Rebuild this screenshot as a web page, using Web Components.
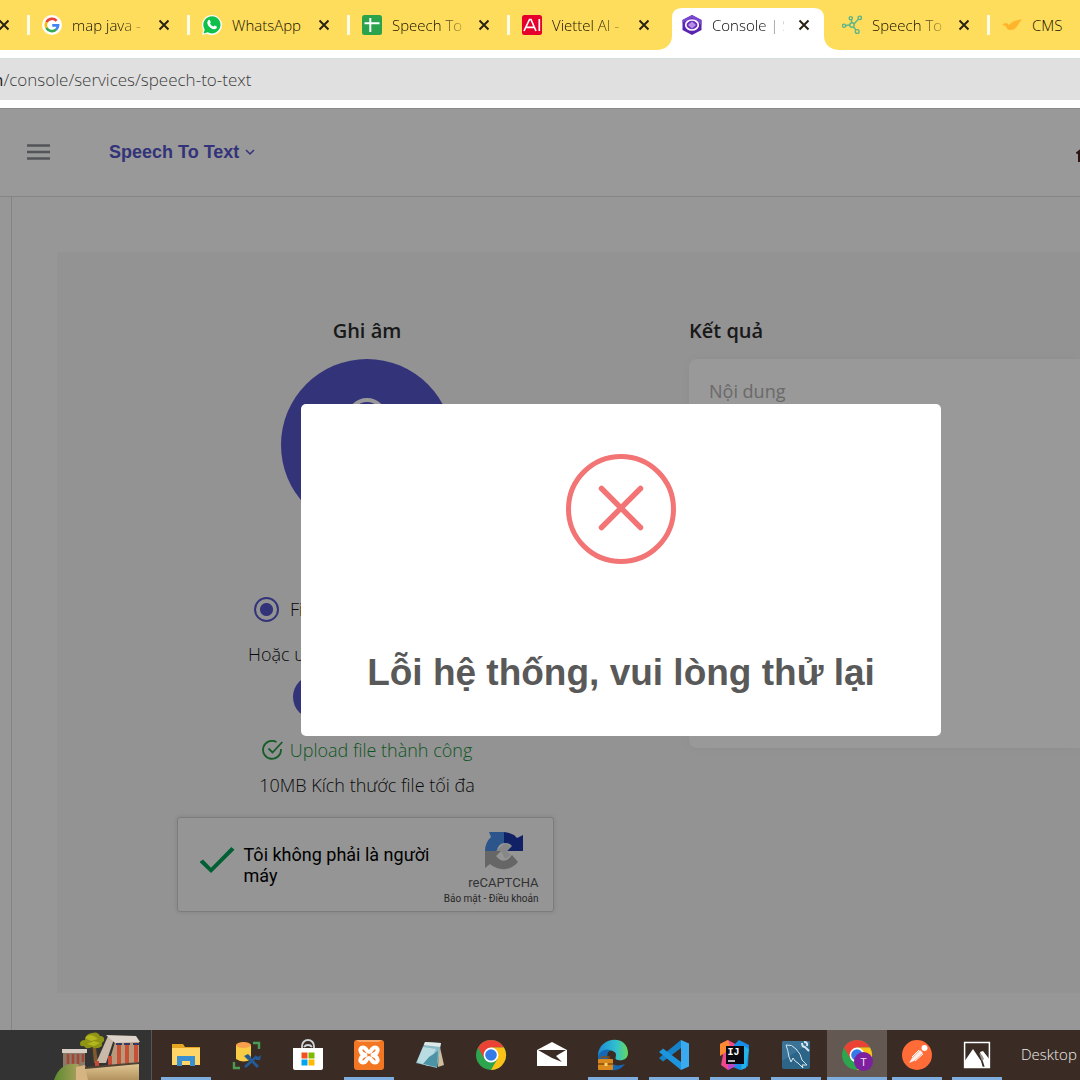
<!DOCTYPE html>
<html lang="vi">
<head>
<meta charset="utf-8">
<title>Console | Speech To Text</title>
<style>
  html, body { margin: 0; min-height: 100%; }
  body { font-family: "Open Sans", "Noto Sans", sans-serif; color: #2b2b2b; overflow-x: hidden; }
</style>
</head>
<body>
<desktop-screen></desktop-screen>

<script>
const define = (name, css, html) => {
  const tpl = document.createElement('template');
  tpl.innerHTML = `<style>*{box-sizing:border-box}${css}</style>${html}`;
  customElements.define(name, class extends HTMLElement {
    constructor() {
      super();
      this.attachShadow({ mode: 'open' }).append(tpl.content.cloneNode(true));
    }
  });
};

/* ---------- browser chrome ---------- */
define('browser-tab', `
  :host { display: flex; align-items: center; flex: none; width: 160px; height: 50px; position: relative;
    padding: 0 14px 0 14px; gap: 10px; box-sizing: border-box; font-size: 15px; color: #140f02; font-weight: 300; }
  :host([divided])::before { content: ""; width: 3px; height: 20px; background: #fffbe9; position: absolute; left: -1px; top: 15px; }
  :host([cut]) { width: 28px; justify-content: flex-end; overflow: hidden; }
  :host([cut]) .label, :host([cut]) slot[name=icon] { display: none; }
  :host([active]) { color: #000; z-index: 1; }
  .plate { display: none; }
  :host([active]) .plate { display: block; position: absolute; left: -12px; top: 8px; width: 184px; height: 42px; z-index: -1; }
  ::slotted(svg) { width: 20px; height: 20px; flex: none; display: block; }
  .label { flex: 1; min-width: 0; overflow: hidden; white-space: nowrap; line-height: 24px;
    -webkit-mask-image: linear-gradient(90deg, #000 65%, transparent 110%); mask-image: linear-gradient(90deg, #000 65%, transparent 110%); }
  :host([full]) .label { -webkit-mask-image: none; mask-image: none; }
  button { flex: none; width: 20px; height: 20px; padding: 0; border: 0; background: none; display: grid; place-items: center; }
`, `
  <svg class="plate" viewBox="0 0 184 42"><path d="M0 42C10 42 16 36 16 28V10Q16 0 26 0H158Q168 0 168 10V28C168 36 174 42 184 42Z" fill="#fff"/></svg>
  <slot name="icon"></slot>
  <span class="label"><slot></slot></span>
  <button aria-label="Đóng thẻ"><svg width="12" height="12" viewBox="0 0 12 12"><path d="M1.5 1.5l9 9M10.5 1.5l-9 9" stroke="#2a2313" stroke-width="2"/></svg></button>
`);

define('address-bar', `
  :host { display: block; background: #fff; padding: 8px 0; }
  label { display: flex; align-items: center; height: 42px; background: #e0e0e0; border-top: 1px solid #d6e0da; font-size: 17px; font-weight: 300; color: #222; }
  span { margin-left: -7px; font-weight: 400; }
  input { flex: 1; min-width: 0; height: 40px; border: 0; padding: 0; background: none; outline: 0; font: inherit; color: #3c3c3c; }
`, `<label><span>n</span><input aria-label="Địa chỉ" value="/console/services/speech-to-text"></label>`);

define('tab-strip', `
  :host { display: flex; height: 50px; background: #ffdd5c; overflow: hidden; }
`, `
  <browser-tab cut></browser-tab>
  <browser-tab divided>
    <svg slot="icon" viewBox="0 0 20 20"><circle cx="10" cy="10" r="10" fill="#fff"/>
      <g fill="none" stroke-width="2.6"><path d="M14.6 5.8A6.2 6.2 0 0 0 4.5 7.2" stroke="#ea4335"/><path d="M4.5 7.2a6.2 6.2 0 0 0 0 5.6" stroke="#fbbc05"/><path d="M4.5 12.8a6.2 6.2 0 0 0 9.6 1.8" stroke="#34a853"/><path d="M14.1 14.6a6 6 0 0 0 2-4.2H10.2" stroke="#4285f4"/></g></svg>map java - Google</browser-tab>
  <browser-tab divided full>
    <svg slot="icon" viewBox="0 0 20 20"><path d="M0 20l1.3-5A10 10 0 1 1 5 18.7Z" fill="#fff"/><path d="M1.6 18.4l1.1-3.9a8.6 8.6 0 1 1 3 2.8Z" fill="#0fc14b"/><path d="M6.4 5.2c.5-.5 1.3-.5 1.6.2l.7 1.7c.2.6-.7 1.2-.6 1.5.7 1.5 1.8 2.5 3.2 3 .4.1 1-1.1 1.4-1l1.9.9c.5.3.3 1.4-.3 2-1.3 1.2-3.400.9-5.200-.2C7.300 12.200 5.900 10.400 5.400 8.500c-.3-1.300.1-2.500 1-3.300Z" fill="#fff"/></svg>WhatsApp</browser-tab>
  <browser-tab divided>
    <svg slot="icon" viewBox="0 0 20 20"><rect width="20" height="20" rx="2.500" fill="#2ba24c"/><path d="M8.300 3v14M2.500 8.300h15" stroke="#fff" stroke-width="2"/></svg>Speech To Text</browser-tab>
  <browser-tab divided>
    <svg slot="icon" viewBox="0 0 20 20"><rect width="20" height="20" rx="2.500" fill="#e6002b"/><path d="M2 16L7.500 4.500h1.500L14 16M4.500 12.300H12M17.300 4v12" fill="none" stroke="#fff" stroke-width="1.700"/></svg>Viettel AI - Nền</browser-tab>
  <browser-tab active>
    <svg slot="icon" viewBox="0 0 20 20"><path d="M10 0l9.500 5v10L10 20 .5 15V5Z" fill="#5a22b0"/><path d="M10 0l9.500 5v5L10 3 .5 8V5Z" fill="#7a48cc"/><ellipse cx="10" cy="10" rx="6.300" ry="5" fill="#6a30ba" stroke="#fff" stroke-width="1.700"/><path d="M10 6.500l4 3.500-4 3.500L6 10Z" fill="#b98ce8"/></svg>Console | Speech</browser-tab>
  <browser-tab>
    <svg slot="icon" viewBox="0 0 20 20" fill="none" stroke="#5cb58d" stroke-width="1.400"><path d="M4 10.500l4-.5M12 9l4.500-5M9.300 5l.5 2.500M11.500 12l2.500 3"/><circle cx="2" cy="10.700" r="1.600"/><circle cx="10" cy="10" r="2.200"/><circle cx="8.800" cy="3.200" r="1.600"/><circle cx="17.800" cy="2.800" r="1.700"/><circle cx="15.200" cy="16.500" r="1.900"/></svg>Speech To Text</browser-tab>
  <browser-tab divided full>
    <svg slot="icon" viewBox="0 0 20 20"><path d="M0 10q4-4 7 0Q11 5 20 4.500 17 8 15 11.500q-3 4-7 3.500-3 0-4-3.500-2-2-4-1.500Z" fill="#ffb52b"/></svg>CMS</browser-tab>
`);

/* ---------- application ---------- */
define('app-header', `
  :host { display: flex; align-items: center; height: 89px; padding: 0 0 2px 27px; background: #fff; border-top: 1px solid #e8e8e8; border-bottom: 1px solid #dcdcdc; box-sizing: border-box; overflow: hidden; }
  button { border: 0; padding: 0; background: none; display: flex; align-items: center; }
  .service { margin-left: 59px; gap: 6px; font: bold 18px/24px "Liberation Sans", Arial, sans-serif; color: #5555cb; }
  a { margin: 2px -12px 0 auto; display: block; height: 16px; }
`, `
  <button aria-label="Menu"><svg width="23" height="16" viewBox="0 0 23 16"><path d="M0 1.500h23M0 8h23M0 14.500h23" stroke="#8a8c92" stroke-width="2.400"/></svg></button>
  <button class="service">Speech To Text<svg width="10" height="8" viewBox="0 0 10 8"><path d="M1 2l4 4 4-4" fill="none" stroke="#5555cb" stroke-width="1.500"/></svg></button>
  <a href="#" aria-label="Trang chủ"><svg width="16" height="16" viewBox="0 0 16 16"><path d="M.5 7.500L8 1l7.500 6.500M3 6v9h10V6" fill="none" stroke="#4a2420" stroke-width="2"/></svg></a>
`);

define('record-button', `
  :host { display: block; }
  button { display: flex; justify-content: center; align-items: flex-start; width: 172px; height: 172px; padding: 39px 0 0; border: 0; border-radius: 50%; background: #5555cb; }
`, `<button aria-label="Ghi âm"><svg width="66" height="94" viewBox="0 0 66 94" fill="none" stroke="#fff" stroke-width="4"><rect x="15" y="2" width="36" height="56" rx="18"/><path d="M4 40a29 29 0 0 0 58 0M33 70v20M18 91h30"/></svg></button>`);

define('captcha-box', `
  :host { display: flex; box-sizing: border-box; width: 377px; height: 95px; padding: 14px 14px 4px 22px; background: #f9f9f9; border: 1px solid #cfcfcf; border-radius: 3px; box-shadow: 0 0 4px 1px rgba(0,0,0,.08); font-family: Roboto, sans-serif; font-weight: 400; }
  label { flex: 1; min-width: 0; display: flex; align-items: center; gap: 9px; padding-bottom: 10px; font-size: 18px; line-height: 21px; color: #000; }
  label span { width: 196px; flex: none; }
  input { appearance: none; flex: none; margin: 0 0 9px; width: 35px; height: 26px; background: #009e55;
    clip-path: polygon(0 58%, 10% 48%, 33% 80%, 91% 0, 100% 11%, 33% 100%); }
  .brand { flex: none; display: flex; flex-direction: column; align-items: flex-end; color: #555; }
  .brand svg { margin-right: 16px; display: block; }
  .name { font-size: 13px; line-height: 16px; margin: 5px 0 0; }
  .links { font-size: 10px; line-height: 15px; color: #444; }
  a { color: inherit; text-decoration: none; }
`, `
  <label><input type="checkbox" checked><span>Tôi không phải là người máy</span></label>
  <div class="brand">
    <svg width="38" height="38" viewBox="0 0 38 38"><path d="M0 19A19 19 0 0 1 6 5L4 0H19V11A8 8 0 0 0 12 19Z" fill="#4a90e8"/><path d="M19 0A19 19 0 0 1 32 6L38 3V19H22L27 14A9 9 0 0 0 19 11Z" fill="#1c3aa9"/><path d="M0 19H16L11 24Q19 34 27 23L33 30A19 19 0 0 1 5 32L0 36Z" fill="#ababab"/><path d="M11 19L20 11 26 14 22 19 26 23 20 27 16 19Z" fill="#e2e2e2"/></svg>
    <span class="name">reCAPTCHA</span>
    <span class="links"><a href="#">Bảo mật</a> - <a href="#">Điều khoản</a></span>
  </div>
`);

define('speech-form', `
  :host { display: flex; flex-direction: column; align-items: center; font-size: 18px; line-height: 28px; font-weight: 300; color: #111; }
  h2 { margin: 0 0 14px; font-size: 20px; line-height: 28px; font-weight: 600; color: #2b2b2b; }
  .choice { display: flex; align-items: center; gap: 11px; width: 226px; margin-top: 64px; }
  input { appearance: none; flex: none; width: 25px; height: 25px; margin: 0; border: 2px solid #5555cb; border-radius: 50%; background: radial-gradient(circle, #5555cb 6px, transparent 7px); }
  p { margin: 0; }
  .hint { width: 238px; margin-top: 17px; }
  .pick { width: 148px; height: 44px; margin: 7px 0 17px; border: 0; border-radius: 22px; background: #5555cb; }
  .done { display: flex; align-items: center; gap: 7px; color: #16903a; }
  .size { margin: 7px 0 18px; }
  captcha-box { margin-right: 4px; }
`, `
  <h2>Ghi âm</h2>
  <record-button></record-button>
  <label class="choice"><input type="radio" checked><span>File</span></label>
  <p class="hint">Hoặc upload</p>
  <button class="pick" aria-label="Chọn file"></button>
  <p class="done"><svg width="21" height="20" viewBox="0 0 21 20" fill="none" stroke="#249a42" stroke-width="1.800"><path d="M14.500 2A9 9 0 1 0 19 9M6.500 8.500l4 4L20.300 2"/></svg>Upload file thành công</p>
  <p class="size">10MB Kích thước file tối đa</p>
  <captcha-box></captcha-box>
`);

define('result-panel', `
  :host { display: flex; flex-direction: column; }
  label { margin: 0 0 14px; font-size: 20px; line-height: 28px; font-weight: 600; }
  textarea { display: block; width: 100%; height: 389px; padding: 18px 20px; border: 0; border-radius: 8px 0 0 8px; background: #fff; box-shadow: 0 0 12px rgba(0,0,0,.04); resize: none; outline: 0; font: 400 18px/28px "Open Sans", "Noto Sans", sans-serif; color: #333; }
  textarea::placeholder { color: #b0b0b0; opacity: 1; }
`, `<label for="out">Kết quả</label><textarea id="out" placeholder="Nội dung"></textarea>`);

define('service-page', `
  :host { display: flex; flex: 1; background: #fcfcfc; }
  aside { flex: none; width: 12px; border-right: 1px solid #dcdcdc; }
  main { flex: 1; min-width: 0; padding: 55px 0 37px 45px; display: flex; }
  .card { flex: 1; min-width: 0; display: grid; grid-template-columns: 620px minmax(0, 1fr); gap: 12px; padding: 65px 0 81px; background: #f5f5f5; }
`, `<aside></aside><main><div class="card"><speech-form></speech-form><result-panel></result-panel></div></main>`);

define('error-dialog', `
  :host { position: absolute; inset: 0; display: flex; align-items: center; justify-content: center; padding: 2px 0 0 162px; background: rgba(0,0,0,.4); box-sizing: border-box; }
  div { width: 640px; padding: 50px 20px 39px; background: #fff; border-radius: 5px; text-align: center; }
  svg { display: block; margin: 0 auto 85px; }
  h1 { margin: 0; font: bold 37px/48px "Liberation Sans", Arial, sans-serif; color: #595959; }
`, `
  <div role="alertdialog" aria-labelledby="t">
    <svg width="110" height="110" viewBox="0 0 110 110" fill="none" stroke="#f27474" stroke-width="5"><circle cx="55" cy="55" r="52.500"/><path d="M35.500 34.500l39 39M74.500 34.500l-39 39" stroke-width="5.500" stroke-linecap="round"/></svg>
    <h1 id="t"><slot></slot></h1>
  </div>
`);

/* ---------- task bar ---------- */
define('task-item', `
  :host { display: block; flex: none; width: 60px; height: 50px; }
  button { display: grid; place-items: center; position: relative; width: 100%; height: 100%; padding: 0; border: 0; background: none; }
  :host([open]) button::after { content: ""; position: absolute; left: 5px; right: 5px; bottom: 0; height: 3px; background: #7eaee0; }
  :host([current]) button { background: #635852; }
  :host([current]) button::after { left: 0; right: 0; }
  ::slotted(svg) { width: 32px; height: 32px; display: block; }
`, `<button><slot></slot></button>`);

define('task-bar', `
  :host { display: flex; height: 50px; background: #3a2c25; overflow: hidden; }
  .search { flex: none; display: flex; justify-content: flex-end; width: 152px; padding-right: 9px; border: 0; border-right: 1px solid #5b5450; background: #333; }
  .search svg { display: block; }
  .apps { display: flex; gap: 1px; padding-left: 4px; flex: none; }
  .pinned { display: flex; }
  .desk { margin-left: 14px; font-size: 15px; line-height: 48px; color: #f0edeb; white-space: nowrap; font-weight: 300; }
`, `
  <div class="search">
    <svg width="88" height="50" viewBox="0 0 88 50"><defs><linearGradient id="hill"><stop stop-color="#5c8a2e"/><stop offset="1" stop-color="#b9a566"/></linearGradient><linearGradient id="wall" x2="0" y2="1"><stop stop-color="#e6cd9a"/><stop offset="1" stop-color="#b2925e"/></linearGradient></defs>
      <path d="M38 12l3-1 3 22h-4Z" fill="#80592c"/><path d="M26 14q0-4 5-4 0-6 7-7 6-2 8 3 5 0 4 5-3 2-2 5-5 4-10 1-6 3-8-1-4 1-4-2Z" fill="#8f9415"/><path d="M31 8q4-5 9-2l4 3-7 2ZM33 14l7-3 6 2-6 3Z" fill="#b4b61d"/>
      <path d="M9 23h22v14H9Z" fill="#8c7966"/><path d="M8 19h25v4H8Z" fill="#d8cdc3"/><path d="M14 24v10M19 24v10M24 24v10M29 24v8" stroke="#a44636" stroke-width="2.500"/>
      <path d="M0 50q6-18 24-16l6 16Z" fill="url(#hill)"/><path d="M22 37l9-2 4 15H22Z" fill="#d6b583"/>
      <path d="M42 33L54 6h7L52 33Z" fill="#c8b9a8"/><path d="M61 12h24v24H54Z" fill="#b79a7c"/><path d="M52 5l30 1 4 6-25 1Z" fill="#ddd3ca"/>
      <path d="M65 13v22M73 13v22M82 13v20" stroke="#c94f37" stroke-width="4"/><path d="M62 14h6M70 14h6M79 14h6" stroke="#353b67" stroke-width="2"/><path d="M43 31v7M56 26v9" stroke="#c64a34" stroke-width="4"/>
      <path d="M31 38l54-6v18H34Z" fill="url(#wall)"/><path d="M31 38l54-5" stroke="#514034" stroke-width="2"/></svg>
  </div>
  <div class="apps">
    <task-item open aria-label="Explorer"><svg viewBox="0 0 32 32"><path d="M2 5h11l2 3h15v18H2Z" fill="#e5a623"/><path d="M2 9h28v17H2Z" fill="#ffd568"/><path d="M7 27V17h18v10h-5v-5h-8v5Z" fill="#398fd0"/></svg></task-item>
    <task-item aria-label="Database"><svg viewBox="0 0 32 32"><path d="M5 6v14q8 5 15 0V6Z" fill="#f8cc45"/><ellipse cx="12.500" cy="6" rx="7.500" ry="3" fill="#f6a04e"/><path d="M22 4h6v6M3 23v6h6" fill="none" stroke="#4b9b55" stroke-width="2.400"/><path d="M14 28l11-10M16 17l11 11" stroke="#245b96" stroke-width="2.800"/><path d="M13 17l4-2 3 3-3 3ZM24 16l3 2 3-2-1 5h-4Z" fill="#245b96"/></svg></task-item>
    <task-item aria-label="Store"><svg viewBox="0 0 32 32"><path d="M10 10V7a6 6 0 0 1 12 0v3M12 8a5 5 0 0 1 8 0" fill="none" stroke="#cfd4d8" stroke-width="1.800"/><path d="M1 9h30v20q0 2-2 2H3q-2 0-2-2Z" fill="#fff"/><path d="M9.500 13.500h6v6h-6Z" fill="#f25022"/><path d="M16.500 13.500h6v6h-6Z" fill="#7fba00"/><path d="M9.500 20.500h6v6h-6Z" fill="#00a4ef"/><path d="M16.500 20.500h6v6h-6Z" fill="#ffb900"/></svg></task-item>
    <task-item open aria-label="XAMPP"><svg viewBox="0 0 32 32"><rect x="1" y="1" width="30" height="30" rx="3" fill="#f37623"/><path d="M3 1h26l-3 2H6Z" fill="#f7a468"/><path d="M12.500 16C7 15 5.500 8.500 10 8.500c4 0 3 4.500 6 4.500s2-4.500 6-4.500c4.500 0 3 6.500-2.500 7.500 5.500 1 7 7.500 2.500 7.500-4 0-3-4.500-6-4.500s-2 4.500-6 4.500C5.500 23.500 7 17 12.500 16Z" fill="none" stroke="#fff" stroke-width="4" stroke-linejoin="round"/></svg></task-item>
    <task-item aria-label="Notepad"><svg viewBox="0 0 32 32"><path d="M25 4l5 22-6 2Z" fill="#cabf9f"/><path d="M11 3l16 1-4 25L2 24Z" fill="#8cbbc6"/><path d="M11 3l16 1-1 4L10 6Z" fill="#dfe9e8"/><path d="M9 8l13 2-8 17-11-4Z" fill="#b9dce2"/><path d="M15 18l9-6-1 16-14-3Z" fill="#4b93a5"/></svg></task-item>
    <task-item aria-label="Chrome"><svg viewBox="0 0 32 32"><circle cx="16" cy="16" r="15" fill="#2da44e"/><path d="M3 8.500A15 15 0 0 1 29 8.500H16L9.500 19.800Z" fill="#ea4335"/><path d="M29 8.500A15 15 0 0 1 16 31l6.500-11.200L16 8.500Z" fill="#fbc116"/><circle cx="16" cy="16" r="7.400" fill="#fff"/><circle cx="16" cy="16" r="5.800" fill="#347be8"/></svg></task-item>
    <task-item aria-label="Mail"><svg viewBox="0 0 32 32"><path d="M1 11L16 3l15 8v16H1Z" fill="#fff"/><path d="M2 11h28l-10 6 6 6L16 19Z" fill="#3a2c25"/></svg></task-item>
    <task-item open aria-label="Edge"><svg viewBox="0 0 32 32"><defs><linearGradient id="e"><stop stop-color="#1b8ad6"/><stop offset=".6" stop-color="#31bfd0"/><stop offset="1" stop-color="#65d95b"/></linearGradient></defs><path d="M1 16C2-3 31-5 31 14c0 6-5 8-10 7-4-1-2-3-2-5 0-5-9-6-13-2Q2 16 1 21Z" fill="url(#e)"/><path d="M1 17q4-8 12-6-5 5-1 11 6 7 16 3-7 9-17 5Q0 26 1 17Z" fill="#1668b2"/><rect x="1" y="20" width="15" height="11" rx="1" fill="#d9891e"/><path d="M5 20v-2h7v2M1 25h15" fill="none" stroke="#8b4d10" stroke-width="1.400"/><path d="M7.500 24h3v3h-3Z" fill="#ffd263"/></svg></task-item>
    <task-item open aria-label="VS Code"><svg viewBox="0 0 32 32"><path d="M23 1v8L5 22.500 1 19Z" fill="#1682c8"/><path d="M23 31v-8L5 9.500 1 13Z" fill="#1c95dc"/><path d="M23 1l8 3.500v23L23 31Z" fill="#3aa9ef"/></svg></task-item>
    <task-item open aria-label="IntelliJ"><svg viewBox="0 0 32 32"><path d="M1 5l8-4 9 5-3 22-6 3-7-5 2-10Z" fill="#f0488e"/><path d="M1 5l8-4 3 9-11 7Z" fill="#fd8a32"/><path d="M15 6l5-5 10 5-1 21-8 4-7-3Z" fill="#168ee5"/><path d="M25 7l5 3-3 19-5 2Z" fill="#20b2e8"/><path d="M9 25l9 1-9 5Z" fill="#b745cf"/><path d="M7 7h18v18H7Z" fill="#0a0811"/><text x="8.500" y="16" font-family="Liberation Mono" font-size="10" font-weight="bold" fill="#fff">IJ</text><path d="M9 22h7" stroke="#fff" stroke-width="1.400"/></svg></task-item>
    <task-item open aria-label="MySQL"><svg viewBox="0 0 32 32"><rect x="2" y="2" width="28" height="28" rx="2" fill="#2d6588"/><path d="M2 4q0-2 2-2h24q2 0 2 2L2 22Z" fill="#3a7395"/><path d="M6 6q6-1 10 4 5 5 6 11l5 5-5 0 1 3-5-5q-3-1-5-5l-2 4-2-5Q8 11 6 6Z" fill="none" stroke="#d5e6ee" stroke-width="1"/><path d="M22 4q0 4 3 4l4 4M24 3q4 0 3 4" fill="none" stroke="#d5e6ee" stroke-width="2"/></svg></task-item>
    <div class="pinned">
      <task-item open current aria-label="Chrome T"><svg viewBox="0 0 32 32"><circle cx="16" cy="16" r="15" fill="#2da44e"/><path d="M3 8.500A15 15 0 0 1 29 8.500H16L9.500 19.800Z" fill="#ea4335"/><path d="M29 8.500A15 15 0 0 1 16 31l6.500-11.200L16 8.500Z" fill="#fbc116"/><circle cx="16" cy="16" r="7.400" fill="#fff"/><circle cx="16" cy="16" r="5.800" fill="#347be8"/><circle cx="22.500" cy="22.500" r="9.500" fill="#7d20a0"/><text x="22.500" y="26.500" text-anchor="middle" font-family="Roboto" font-size="11" fill="#efdcf6">T</text></svg></task-item>
      <task-item open aria-label="Postman"><svg viewBox="0 0 32 32"><circle cx="16" cy="16" r="15" fill="#ff6c37"/><circle cx="23.500" cy="9" r="3" fill="#fff"/><path d="M8 24l3-5 8-8 3 3-9 8Z" fill="#fbeee9"/><path d="M11 18l7-7M14 22l8-7" stroke="#fff" stroke-width="1"/></svg></task-item>
      <task-item open aria-label="Photos"><svg viewBox="0 0 32 32"><path d="M3.600 3.600h24.800v24.800H3.600Z" fill="#3a2c25" stroke="#fff" stroke-width="1.500"/><path d="M3 23l9-13 8 12 2 7H3ZM19 13l3-1 7 9v8h-5Z" fill="#fff"/><path d="M18 14l3 2 2 4-2 2" fill="#9a938f"/></svg></task-item>
    </div>
  </div>
  <span class="desk">Desktop</span>
`);

define('desktop-screen', `
  :host { display: flex; flex-direction: column; min-height: 100vh; }
  .view { position: relative; flex: 1; display: flex; flex-direction: column; }
`, `
  <tab-strip></tab-strip>
  <address-bar></address-bar>
  <div class="view">
    <app-header></app-header>
    <service-page></service-page>
    <error-dialog>Lỗi hệ thống, vui lòng thử lại</error-dialog>
  </div>
  <task-bar></task-bar>
`);
</script>
</body>
</html>
